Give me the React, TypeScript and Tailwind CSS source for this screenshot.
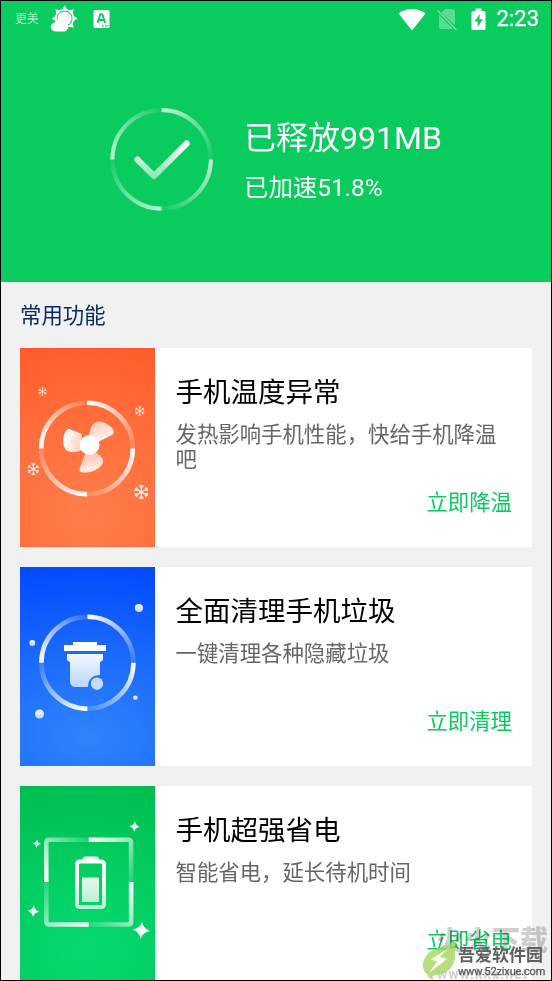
import React from 'react';

type Pt = [number, number];

function Fade({ id, a, b, from = 1, to = 0.12 }: { id: string; a: Pt; b: Pt; from?: number; to?: number }) {
  return (
    <linearGradient id={id} gradientUnits="userSpaceOnUse" x1={a[0]} y1={a[1]} x2={b[0]} y2={b[1]}>
      <stop offset="0" stopColor="#fff" stopOpacity={from} />
      <stop offset="1" stopColor="#fff" stopOpacity={to} />
    </linearGradient>
  );
}

function Ring({ id, cx, cy, r, w, square = false, from = 1, to = 0.12 }: { id: string; cx: number; cy: number; r: number; w: number; square?: boolean; from?: number; to?: number }) {
  const pts: Pt[] = [[cx, cy - r], [cx + r, cy], [cx, cy + r], [cx - r, cy]];
  const corners: Pt[] = [[cx + r, cy - r], [cx + r, cy + r], [cx - r, cy + r], [cx - r, cy - r]];
  return (
    <g fill="none" strokeWidth={w}>
      {pts.map((p, i) => {
        const q = pts[(i + 1) % 4];
        const c = corners[i];
        const k = 3 / r;
        const before: Pt = [c[0] + (p[0] - c[0]) * k, c[1] + (p[1] - c[1]) * k];
        const after: Pt = [c[0] + (q[0] - c[0]) * k, c[1] + (q[1] - c[1]) * k];
        const d = square
          ? `M${p} L${before} Q${c} ${after} L${q}`
          : `M${p} A${r} ${r} 0 0 1 ${q}`;
        return (
          <g key={i}>
            <Fade id={`${id}${i}`} a={p} b={q} from={from} to={to} />
            <path d={d} stroke={`url(#${id}${i})`} />
          </g>
        );
      })}
    </g>
  );
}

function Flake({ x, y, r, o }: { x: number; y: number; r: number; o: number }) {
  return (
    <g transform={`translate(${x} ${y}) scale(${r / 7})`} stroke="#fff" strokeWidth="1.3" opacity={o} fill="none">
      {[0, 60, 120, 180, 240, 300].map((a) => (
        <path key={a} transform={`rotate(${a})`} d="M0 0V-7M-2 -6.4L0 -4.4L2 -6.4" />
      ))}
    </g>
  );
}

function FanArt() {
  return (
    <svg width="135" height="199" viewBox="0 0 135 199" className="block">
      <defs>
        <radialGradient id="obg" gradientUnits="userSpaceOnUse" cx="67" cy="165" r="180">
          <stop offset="0" stopColor="#ff7d4b" />
          <stop offset=".5" stopColor="#ff6f3d" />
          <stop offset="1" stopColor="#ff5b29" />
        </radialGradient>
        <linearGradient id="b1" gradientUnits="userSpaceOnUse" x1="76" y1="74" x2="83" y2="91">
          <stop stopColor="#ffc9b6" /><stop offset="1" stopColor="#fff1ec" />
        </linearGradient>
        <linearGradient id="b2" gradientUnits="userSpaceOnUse" x1="44" y1="90" x2="62" y2="95">
          <stop stopColor="#fff" /><stop offset="1" stopColor="#ffd2c2" />
        </linearGradient>
        <linearGradient id="b3" gradientUnits="userSpaceOnUse" x1="68" y1="106" x2="72" y2="124">
          <stop stopColor="#ffc4af" /><stop offset="1" stopColor="#fff1ed" />
        </linearGradient>
      </defs>
      <path fill="url(#obg)" d="M0 0h135v199H0z" />
      <Ring id="or" cx={67} cy={100.5} r={45.8} w={4.6} />
      <path d="M69 90C69 82 72 75 78 73.500C84 73 92 78 93.600 83C94 85 93 86.500 91 87.500L78 94Z" fill="url(#b1)" />
      <path d="M62 86L50 81.300C48 80.500 46 82 45 84.500C42.500 90 42.500 98 46 102C49 104.600 56 104.600 61 102.500Z" fill="url(#b2)" />
      <path d="M65 106L59.500 121C59 123 60 124.200 63 124.500C70 125.200 80 121.500 82.800 115C83.700 111 81 108 77 105Z" fill="url(#b3)" />
      <circle cx="69.600" cy="97" r="10" fill="#fff" />
      <Flake x={22.5} y={43.5} r={4.3} o={0.8} />
      <Flake x={119.8} y={63} r={4.8} o={0.85} />
      <Flake x={13.3} y={121} r={6} o={0.85} />
      <Flake x={121.3} y={144} r={7.2} o={0.95} />
    </svg>
  );
}

function BinArt() {
  return (
    <svg width="135" height="199" viewBox="0 0 135 199" className="block">
      <defs>
        <radialGradient id="bbg" gradientUnits="userSpaceOnUse" cx="67" cy="170" r="180" gradientTransform="translate(-33.500 0) scale(1.500 1)">
          <stop offset="0" stopColor="#2f85fa" />
          <stop offset=".45" stopColor="#1c6bfa" />
          <stop offset="1" stopColor="#0047ff" />
        </radialGradient>
        <linearGradient id="bin" x1="0" y1="0" x2="0" y2="1">
          <stop stopColor="#f4f8ff" /><stop offset="1" stopColor="#bcd5ff" />
        </linearGradient>
      </defs>
      <path fill="url(#bbg)" d="M0 0h135v199H0z" />
      <Ring id="br" cx={67.4} cy={95.7} r={46} w={4.6} />
      <path d="M53 75h24v3h9v6H44v-6h9z" fill="#fff" />
      <path d="M47 87h36v5.500q0 1.500-3 2.500V108c-7 0-12 4-12 12H56q-6 0-6-6V95q-3-1-3-2.500z" fill="url(#bin)" />
      <circle cx="77" cy="116.700" r="6.200" fill="#c5dbff" />
      <g fill="url(#bin)">
        <circle cx="118.900" cy="41" r="4.100" />
        <circle cx="12.300" cy="76" r="2.900" />
        <circle cx="115.300" cy="130.700" r="2.300" />
        <circle cx="19.500" cy="147" r="4.500" />
      </g>
    </svg>
  );
}

function Spark({ x, y, r, o }: { x: number; y: number; r: number; o: number }) {
  return <path transform={`translate(${x} ${y}) scale(${r / 9}) rotate(5)`} opacity={o} fill="#fff" d="M0-9Q1.500-2 9 0Q1.500 2 0 9Q-1.500 2-9 0Q-1.500-2 0-9Z" />;
}

function BatteryArt() {
  return (
    <svg width="135" height="199" viewBox="0 0 135 199" className="block">
      <defs>
        <radialGradient id="gbg" gradientUnits="userSpaceOnUse" cx="67" cy="165" r="180">
          <stop offset="0" stopColor="#06da71" />
          <stop offset=".5" stopColor="#02cd61" />
          <stop offset="1" stopColor="#00bc4e" />
        </radialGradient>
        <linearGradient id="bat" gradientUnits="userSpaceOnUse" x1="0" y1="74" x2="0" y2="122">
          <stop stopColor="#fff" /><stop offset=".4" stopColor="#fff" /><stop offset="1" stopColor="#b5f2d2" />
        </linearGradient>
        <linearGradient id="cell" x1="0" y1="0" x2="0" y2="1">
          <stop stopColor="#e3f8ed" /><stop offset="1" stopColor="#baf1d5" />
        </linearGradient>
      </defs>
      <path fill="url(#gbg)" d="M0 0h135v199H0z" />
      <Ring id="gr" cx={68.7} cy={96.1} r={42.4} w={4.6} square />
      <rect x="57" y="75.500" width="27" height="45.500" rx="2.500" fill="none" stroke="url(#bat)" strokeWidth="4" />
      <path d="M62.500 76v-2.500q0-3 3-3h10.500q3 0 3 3V76z" fill="#fff" />
      <path d="M62 91.500h17V116H62z" fill="url(#cell)" />
      <Spark x={114.6} y={40.6} r={5.3} o={0.9} />
      <Spark x={16.8} y={57.7} r={4.4} o={0.85} />
      <Spark x={13.4} y={125.2} r={6} o={0.9} />
      <Spark x={121.3} y={144.3} r={8.8} o={0.95} />
    </svg>
  );
}

function Card({ art, title, text, action }: { art: React.ReactNode; title: string; text: string; action: string }) {
  return (
    <section className="flex h-[199px] w-[512px] shrink-0 bg-white">
      <div className="w-[135px] shrink-0">{art}</div>
      <div className="flex min-w-0 flex-1 flex-col pr-5 pl-[20.500px] pt-[25px]">
        <h2 className="h-[40px] text-[27.500px] leading-[40px] text-black">{title}</h2>
        <p className="mt-[9px] h-[65px] w-[324px] text-[21.400px] leading-[25px] text-[#666]">{text}</p>
        <button className="h-[32px] self-end text-[21.400px] leading-[32px] text-[#0acb5e]">{action}</button>
      </div>
    </section>
  );
}

function StatusBar() {
  const rays = [0, 45, 90, 135, 180, 225, 270, 315];
  return (
    <div className="flex h-[36px] shrink-0 items-center text-white">
      <span className="ml-[14px] w-[26px] text-[12px] leading-[16px] font-light whitespace-nowrap opacity-90">更美</span>
      <svg width="28" height="28" viewBox="0 0 28 28" className="ml-[9px]">
        <g fill="#fff">
          {rays.map((a) => (
            <path key={a} transform={`rotate(${a} 14.600 13.500)`} d="M14.600 .5L17.600 5.500H11.600Z" />
          ))}
        </g>
        <circle cx="14.600" cy="13.500" r="8.900" fill="none" stroke="#fff" strokeWidth="1.500" />
        <circle cx="14.600" cy="13.500" r="7" fill="#fff" />
        <path fill="#fff" d="M5.500 26.500a4.500 4.500 0 0 1-.5-9c1-4 7-4.500 8.500-.5 3.500-.2 5 2.500 4.700 5-.2 2.500-2 4.500-4 4.500z" />
      </svg>
      <svg width="18" height="20" viewBox="0 0 18 20" className="ml-[14.500px]">
        <rect x=".5" y="1" width="16" height="18" rx="1.500" fill="#fff" />
        <path d="M4.500 14L7.200 5.500h2.200L12.200 14M6 11h4.800" fill="none" stroke="#0acb5e" strokeWidth="1.900" />
        <path d="M9 16.800h1.500M12 16.800h1.500M14.500 16.800h1" stroke="#0acb5e" strokeWidth="1.500" />
      </svg>
      <div className="ml-auto flex items-center pr-[12px]">
        <svg width="28" height="23" viewBox="0 0 28 23">
          <path fill="#fff" d="M14 22.500L.5 5.500Q6 1 14 1t13.500 4.500z" />
        </svg>
        <svg width="22" height="23" viewBox="0 0 22 23" className="ml-[10px]">
          <path fill="#fff" opacity=".33" d="M9.500 1H17q2 0 2 2v14.500L5 4.800zM3 6.800L17 21H5q-2 0-2-2z" />
          <path d="M1.500 2.500L20.500 22" stroke="#fff" opacity=".4" strokeWidth="1.700" />
        </svg>
        <svg width="15" height="23" viewBox="0 0 15 23" className="ml-[12.500px]">
          <path fill="#fff" d="M4.500.5h6V3H13q1.500 0 1.500 1.500v16Q14.500 22 13 22H2Q.5 22 .5 20.500v-16Q.5 3 2 3h2.500z" />
          <path fill="#0acb5e" d="M8.700 6L3.500 13.500h3.200v5.500L11.800 11.200H8.500z" />
        </svg>
        <time className="ml-[11px] text-[22px] leading-[26px] font-normal [-webkit-text-stroke:0.300px_white]">2:23</time>
      </div>
    </div>
  );
}

function SiteMark() {
  return (
    <>
      <div className="pointer-events-none absolute right-0 bottom-0 h-[54px] w-[131px] mix-blend-multiply">
        <div className="absolute top-[-1px] left-[16px] text-[28px] leading-[34px] font-black whitespace-nowrap text-[#888]/40">火火下载</div>
        <div className="absolute bottom-[-3px] left-[17px] text-[14px] leading-[18px] font-bold whitespace-nowrap tracking-[1px] text-[#999]/45">www.kkx.net</div>
      </div>
      <div className="pointer-events-none absolute right-0 bottom-0 h-[54px] w-[131px]">
        <svg width="36" height="43" viewBox="0 0 36 43" className="absolute bottom-0 left-[2px]">
          <path fill="#a4d65e" fillOpacity=".8" d="M33 3C29 10 12 9 5 18C-1 25 0 34 5 37C5 39 7 41 11 43C11 40 9 39 13 38C25 38 33 29 33 20Z" />
          <path fill="#fff" fillOpacity=".92" d="M25 12L8 23l7 1-8 12 18-14-7-2z" />
        </svg>
        <div className="absolute top-[18px] left-[38px] text-[17px] leading-[22px] font-bold whitespace-nowrap text-[#606060]">吾爱软件园</div>
        <div className="absolute bottom-0 left-[38px] text-[11px] leading-[16px] font-normal whitespace-nowrap text-[#555] [-webkit-text-stroke:0.250px_#555] tracking-[-0.150px]">www.52zixue.com</div>
      </div>
    </>
  );
}

export default function App() {
  return (
    <main className="relative flex h-[981px] w-[552px] flex-col overflow-hidden border border-black bg-[#f1f1f1] font-[Roboto,'Noto_Sans_CJK_SC',sans-serif]">
      <header className="flex h-[281px] shrink-0 flex-col bg-[#0acb5e] text-white">
        <StatusBar />
        <div className="flex pt-[70px] pl-[108px]">
          <svg width="106" height="106" viewBox="0 0 106 106">
            <Ring id="hr" cx={52.6} cy={52.4} r={49.2} w={4.2} from={0.72} to={0.05} />
            <Fade id="chk" a={[0, 35]} b={[0, 72]} from={1} to={0.5} />
            <path d="M28.300 52.500L45 69L77.700 36.500" fill="none" stroke="url(#chk)" strokeWidth="6" strokeLinecap="round" strokeLinejoin="round" />
          </svg>
          <div className="ml-[29px] pt-[8px]">
            <h1 className="text-[32px] leading-[46px]">已释放991MB</h1>
            <p className="mt-[9px] text-[24.400px] leading-[36px]">已加速51.8%</p>
          </div>
        </div>
      </header>
      <h2 className="h-[66px] shrink-0 pl-[19px] text-[21.400px] leading-[67px] text-[#082a66]">常用功能</h2>
      <div className="flex flex-col gap-5 pl-[19px]">
        <Card art={<FanArt />} title="手机温度异常" text="发热影响手机性能，快给手机降温吧" action="立即降温" />
        <Card art={<BinArt />} title="全面清理手机垃圾" text="一键清理各种隐藏垃圾" action="立即清理" />
        <Card art={<BatteryArt />} title="手机超强省电" text="智能省电，延长待机时间" action="立即省电" />
      </div>
      <SiteMark />
    </main>
  );
}
